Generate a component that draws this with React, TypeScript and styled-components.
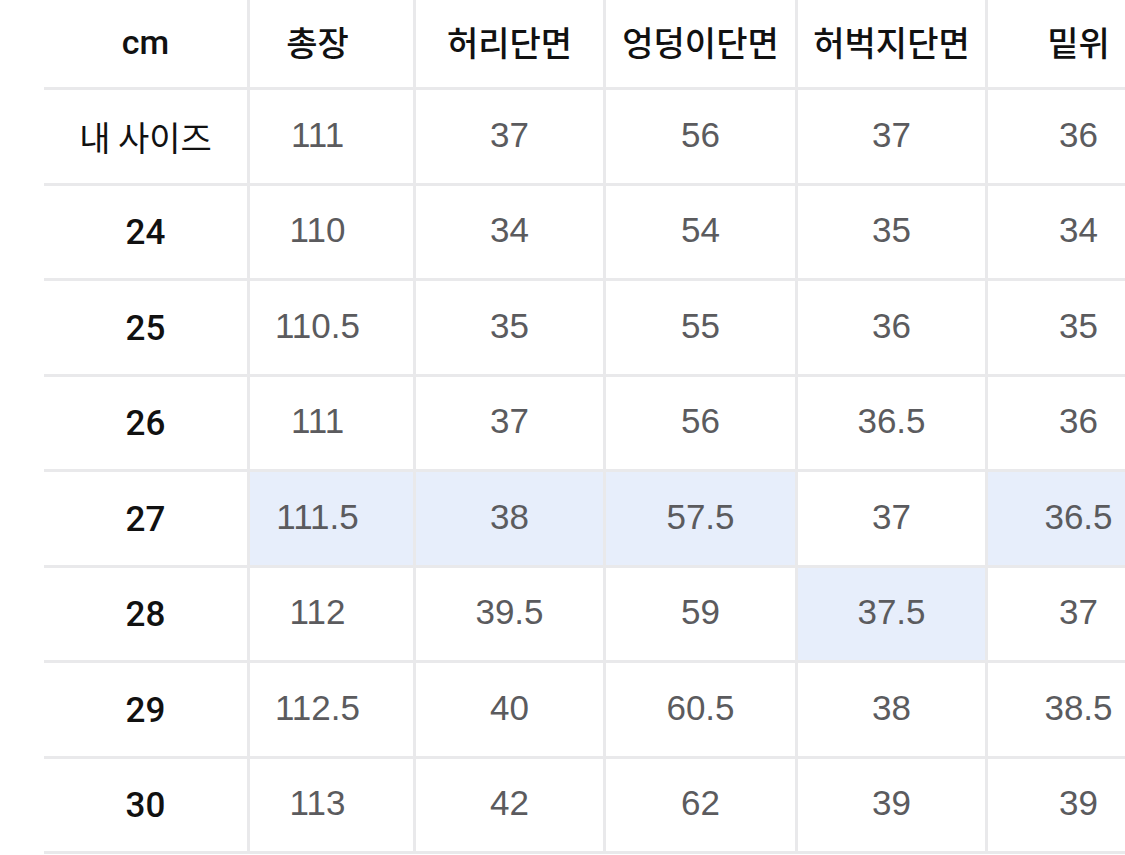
import React from "react";
import styled, { createGlobalStyle } from "styled-components";

const GlobalStyle = createGlobalStyle`
  html, body {
    margin: 0;
    padding: 0;
    background: #ffffff;
    overflow: hidden;
  }
`;

type Row = {
  label: string;
  values: string[];
  marked?: number[];
};

const headers = ["총장", "허리단면", "엉덩이단면", "허벅지단면", "밑위"];

const rows: Row[] = [
  { label: "내 사이즈", values: ["111", "37", "56", "37", "36"] },
  { label: "24", values: ["110", "34", "54", "35", "34"] },
  { label: "25", values: ["110.5", "35", "55", "36", "35"] },
  { label: "26", values: ["111", "37", "56", "36.5", "36"] },
  { label: "27", values: ["111.5", "38", "57.5", "37", "36.5"], marked: [0, 1, 2, 4] },
  { label: "28", values: ["112", "39.5", "59", "37.5", "37"], marked: [3] },
  { label: "29", values: ["112.5", "40", "60.5", "38", "38.5"] },
  { label: "30", values: ["113", "42", "62", "39", "39"] },
];

const App: React.FC = () => {
  return (
    <>
      <GlobalStyle />
      <Page>
        <SizeTable>
          <HeadCell $first>cm</HeadCell>
          {headers.map((h, i) => (
            <HeadCell key={h} $col={i + 1}>
              {h}
            </HeadCell>
          ))}
          {rows.map((row) => (
            <React.Fragment key={row.label}>
              <LabelCell $wide={row.label.length > 2}>{row.label}</LabelCell>
              {row.values.map((v, i) => (
                <ValueCell key={i} $col={i + 1} $marked={row.marked?.includes(i)}>
                  {v}
                </ValueCell>
              ))}
            </React.Fragment>
          ))}
        </SizeTable>
      </Page>
    </>
  );
};

const Page = styled.div`
  width: 1125px;
  height: 855px;
  overflow: hidden;
  padding-left: 44px;
  box-sizing: border-box;
`;

const SizeTable = styled.div`
  display: grid;
  grid-template-columns: 203px 163px 187px 189px 187px 187px;
  grid-template-rows: 87px repeat(8, 92.5px);
  gap: 3px;
  padding-bottom: 3px;
  width: max-content;
  background: #e9e9eb;
  font-family: "Liberation Sans", "Noto Sans CJK KR", Arial, sans-serif;
`;

const Cell = styled.div<{ $col?: number }>`
  display: flex;
  align-items: center;
  justify-content: center;
  background: #ffffff;
  padding-right: ${(p) => (p.$col === 1 ? "28px" : p.$col === 5 ? "6px" : "0")};
  white-space: nowrap;
`;

const HeadCell = styled(Cell)<{ $first?: boolean }>`
  font-family: ${(p) =>
    p.$first ? `Roboto, "Liberation Sans", sans-serif` : `"Noto Sans CJK KR", "Noto Sans", sans-serif`};
  font-size: ${(p) => (p.$first ? "34px" : "34px")};
  font-weight: 500;
  color: #111111;
  padding-bottom: 4px;
`;

const LabelCell = styled(Cell)<{ $wide?: boolean }>`
  font-family: ${(p) =>
    p.$wide ? `"Noto Sans CJK KR", "Noto Sans", sans-serif` : `Roboto, "Liberation Sans", sans-serif`};
  font-size: ${(p) => (p.$wide ? "34px" : "35px")};
  font-weight: ${(p) => (p.$wide ? 400 : 500)};
  color: #111111;
  padding-top: ${(p) => (p.$wide ? "0" : "2px")};
`;

const ValueCell = styled(Cell)<{ $marked?: boolean }>`
  background: ${(p) => (p.$marked ? "#e7eefb" : "#ffffff")};
  font-size: 35px;
  color: #5b5b5e;
  padding-bottom: 3px;
`;

export default App;
